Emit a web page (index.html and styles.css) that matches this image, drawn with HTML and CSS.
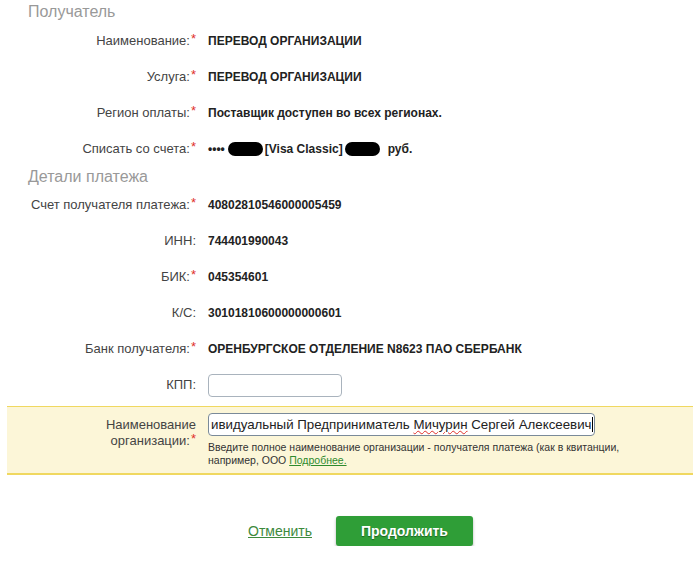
FILE: index.html
```html
<!DOCTYPE html>
<html lang="ru">
<head>
  <meta charset="UTF-8">
  <title>Платеж</title>
  <link rel="stylesheet" href="styles.css">
</head>
<body>

  <div class="payment">
    <h2 class="section-title">Получатель</h2>

    <div class="row">
      <div class="label">Наименование:<span class="req">*</span></div>
      <div class="value">ПЕРЕВОД ОРГАНИЗАЦИИ</div>
    </div>
    <div class="row">
      <div class="label">Услуга:<span class="req">*</span></div>
      <div class="value">ПЕРЕВОД ОРГАНИЗАЦИИ</div>
    </div>
    <div class="row">
      <div class="label">Регион оплаты:<span class="req">*</span></div>
      <div class="value">Поставщик доступен во всех регионах.</div>
    </div>
    <div class="row">
      <div class="label">Списать со счета:<span class="req">*</span></div>
      <div class="value">••••<span class="mask"></span>[Visa Classic]<span class="mask mask-sum"></span>руб.</div>
    </div>

    <h2 class="section-title section-title-next">Детали платежа</h2>

    <div class="row">
      <div class="label">Счет получателя платежа:<span class="req">*</span></div>
      <div class="value">40802810546000005459</div>
    </div>
    <div class="row">
      <div class="label">ИНН:</div>
      <div class="value">744401990043</div>
    </div>
    <div class="row">
      <div class="label">БИК:<span class="req">*</span></div>
      <div class="value">045354601</div>
    </div>
    <div class="row">
      <div class="label">К/С:</div>
      <div class="value">30101810600000000601</div>
    </div>
    <div class="row">
      <div class="label">Банк получателя:<span class="req">*</span></div>
      <div class="value">ОРЕНБУРГСКОЕ ОТДЕЛЕНИЕ N8623 ПАО СБЕРБАНК</div>
    </div>
    <div class="row">
      <div class="label">КПП:</div>
      <div class="value"><input type="text" class="field field-short"></div>
    </div>

    <div class="row row-active">
      <div class="label">Наименование<br>организации:<span class="req">*</span></div>
      <div class="value">
        <div class="field field-long">ивидуальный Предприниматель <span class="typo">Мичурин</span> Сергей Алексеевич<span class="caret"></span></div>
        <div class="hint">Введите полное наименование организации - получателя платежа (как в квитанции, например, ООО <a href="#">Подробнее.</a></div>
      </div>
    </div>

    <div class="actions">
      <a href="#" class="cancel">Отменить</a>
      <button type="button" class="btn-next">Продолжить</button>
    </div>
  </div>

</body>
</html>
```

FILE: styles.css
```css
body {
  margin: 0;
  font-family: "Liberation Sans", Arial, sans-serif;
  font-size: 13px;
  color: #444;
  background: #fff;
}

.payment {
  padding: 0 4px 0 7px;
}

.section-title {
  margin: 0;
  padding-left: 21px;
  height: 23px;
  line-height: 23px;
  font-size: 16px;
  font-weight: normal;
  color: #999;
}

.section-title-next {
  height: 20px;
  line-height: 20px;
}

.row {
  display: grid;
  grid-template-columns: 189px 1fr;
  column-gap: 12px;
  align-items: center;
  height: 36px;
}

.label {
  text-align: right;
  color: #444;
  line-height: 16px;
}

.req {
  color: #e0302a;
  margin-left: 1px;
  position: relative;
  top: -2px;
}

.value {
  font-size: 12px;
  font-weight: bold;
  color: #222;
}

.mask {
  display: inline-block;
  width: 35px;
  height: 14px;
  margin: 0 2px 0 3px;
  background: #000;
  border-radius: 7px;
  vertical-align: -3px;
}

.mask-sum {
  margin: 0 8px 0 2px;
}

.field {
  box-sizing: border-box;
  height: 23px;
  border: 1px solid #a9b3bd;
  border-radius: 4px;
  background: #fff;
  font-family: "Liberation Sans", Arial, sans-serif;
  font-size: 13px;
  font-weight: normal;
  color: #222;
}

.field-short {
  width: 134px;
  display: block;
}

.field-long {
  width: 387px;
  font-size: 13.3px;
  line-height: 21px;
  padding-left: 2px;
  white-space: nowrap;
  overflow: hidden;
  border-color: #7a8a99;
}

.typo {
  text-decoration: underline wavy #e0302a;
  text-decoration-thickness: 1px;
}

.caret {
  display: inline-block;
  width: 1px;
  height: 15px;
  background: #000;
  vertical-align: -3px;
}

.row-active {
  height: auto;
  align-items: start;
  margin-top: 3px;
  padding: 6px 0 6px;
  background: #fcf6d8;
  border-top: 1px solid #f0d860;
  border-bottom: 2px solid #f0d860;
}

.row-active .label {
  padding-top: 4px;
}

.hint {
  margin-top: 5px;
  font-size: 10.5px;
  font-weight: normal;
  line-height: 13px;
  color: #333;
  max-width: 440px;
}

.hint a {
  color: #2e8b2e;
}

.actions {
  display: flex;
  justify-content: center;
  align-items: center;
  gap: 24px;
  margin-top: 41px;
  padding-left: 21px;
}

.cancel {
  color: #3d8a3d;
  font-size: 14px;
}

.btn-next {
  width: 137px;
  height: 30px;
  border: none;
  border-radius: 3px;
  background: #2f9e37;
  color: #fff;
  font-family: "Liberation Sans", Arial, sans-serif;
  font-size: 14px;
  font-weight: bold;
  text-shadow: 0 1px 1px rgba(0, 0, 0, 0.4);
  box-shadow: 0 2px 3px rgba(0, 0, 0, 0.3);
  cursor: pointer;
}
```
